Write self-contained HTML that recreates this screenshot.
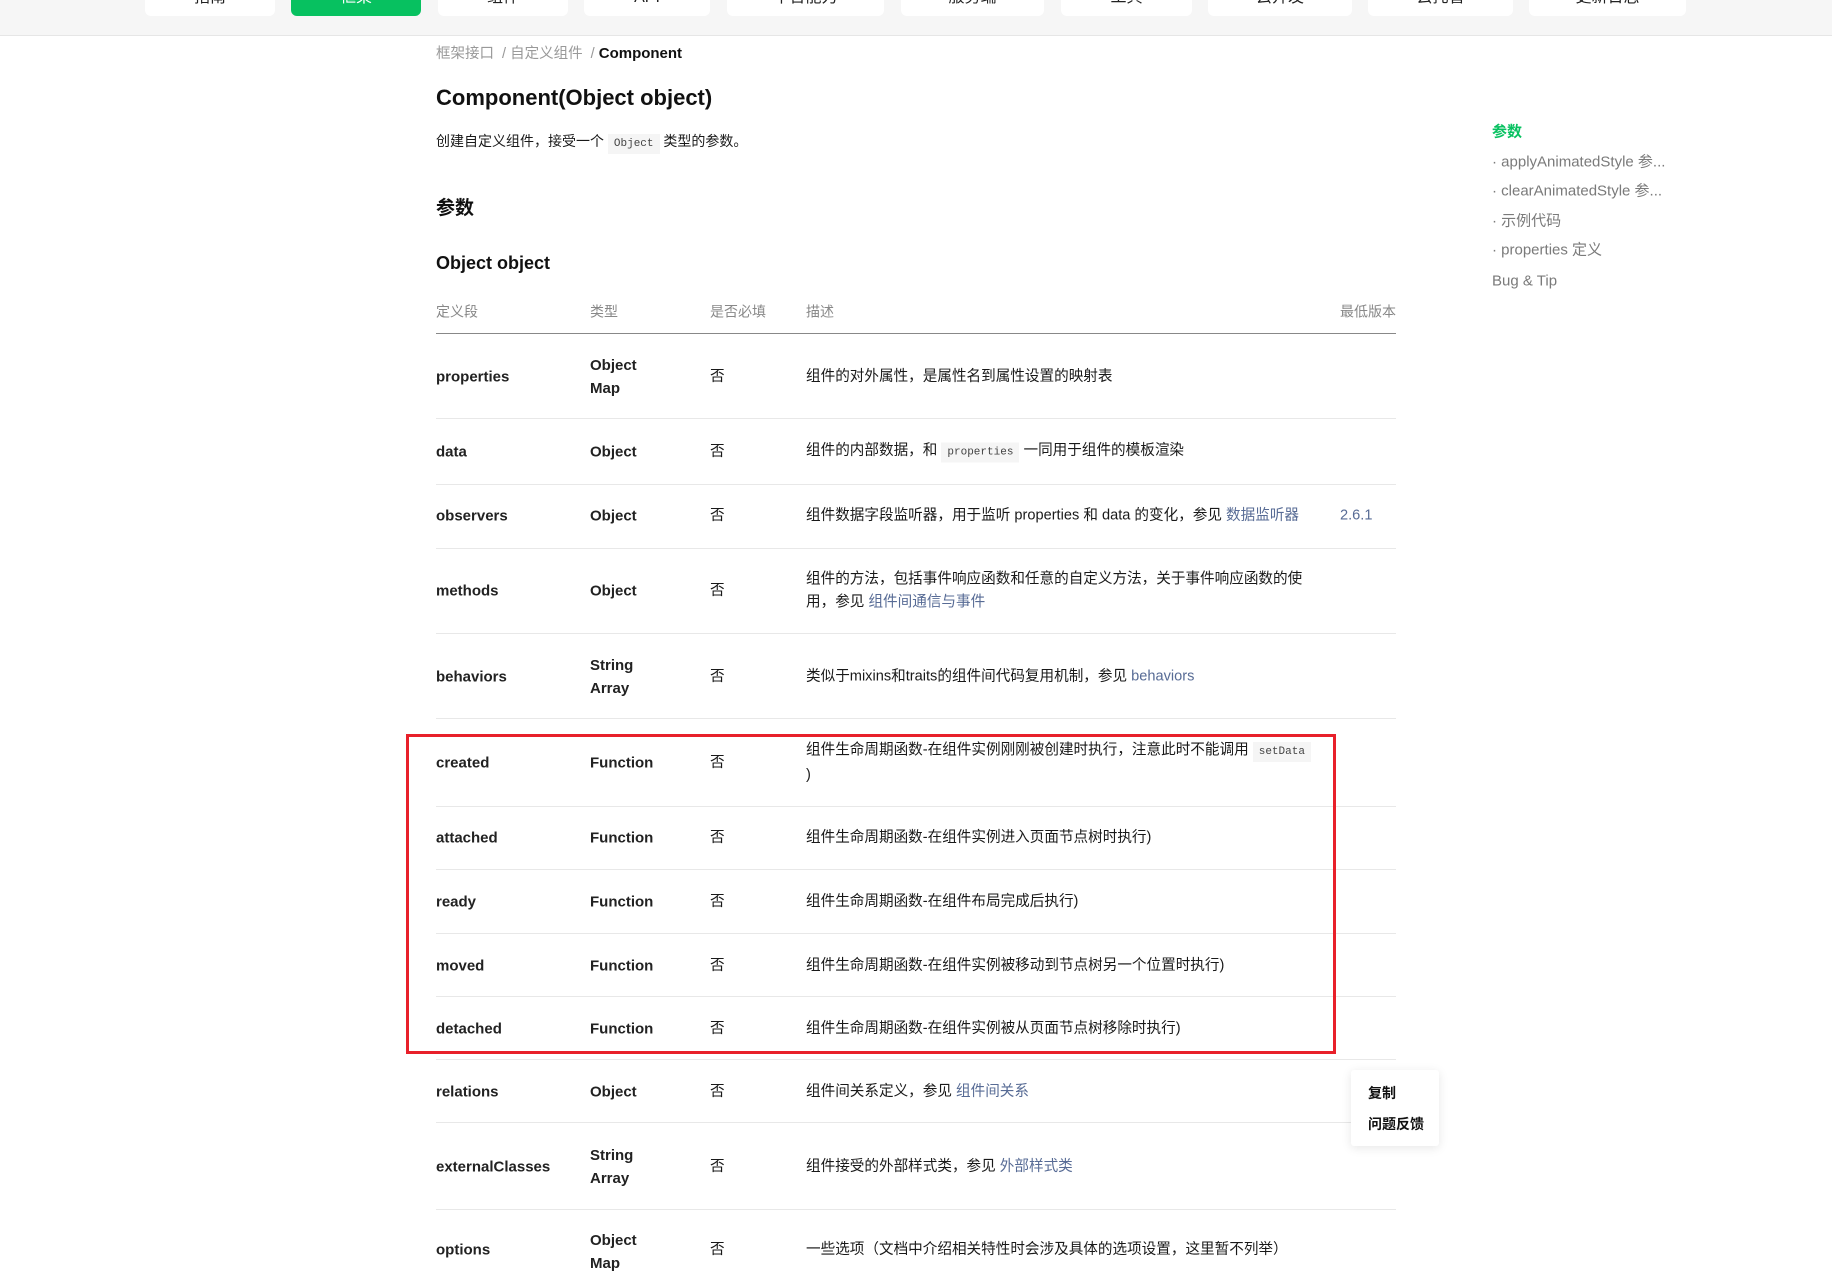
<!DOCTYPE html>
<html><head><meta charset="utf-8"><style>
*{margin:0;padding:0;box-sizing:border-box}
body{width:1832px;height:1253px;overflow:hidden;background:#fff;position:relative;font-family:"Liberation Sans","Noto Sans CJK SC",sans-serif;color:rgba(0,0,0,.9)}
.nav{position:absolute;left:0;top:0;width:1832px;height:36px;background:#f6f6f6;border-bottom:1px solid #e6e6e6}
.nb{position:absolute;top:-10px;height:26px;background:#fff;border-radius:0 0 6px 6px;font-size:16px;text-align:center;line-height:16px;color:#222;overflow:hidden}
.nb.g{background:#07c160;color:#fff}
.a{position:absolute;white-space:nowrap}
.c{position:absolute;white-space:nowrap;transform:translateY(-50%);font-size:14.6px;line-height:23px}
.b{font-weight:bold;color:#222;font-size:15px}
.l{color:#576b95}
code{font-family:"Liberation Mono",monospace;font-size:11px;background:#f5f5f5;padding:4px 6px;color:#444}
.hr{position:absolute;left:436px;width:960px;height:1px;background:#e8e8e8}
.toc{position:absolute;left:1492px;font-size:15px;color:#7a7a7a;white-space:nowrap;transform:translateY(-50%)}
</style></head><body>
<div class="nav">
<div class="nb" style="left:145px;width:130px">指南</div>
<div class="nb g" style="left:291px;width:130px">框架</div>
<div class="nb" style="left:438px;width:130px">组件</div>
<div class="nb" style="left:584px;width:126px">API</div>
<div class="nb" style="left:727px;width:157px">平台能力</div>
<div class="nb" style="left:901px;width:143px">服务端</div>
<div class="nb" style="left:1061px;width:131px">工具</div>
<div class="nb" style="left:1208px;width:144px">云开发</div>
<div class="nb" style="left:1368px;width:145px">云托管</div>
<div class="nb" style="left:1529px;width:157px">更新日志</div>
</div>
<div class="a" style="left:436px;top:42px;font-size:14.5px;color:#999">框架接口 &nbsp;/ 自定义组件 &nbsp;/ <span class="b" style="color:#111">Component</span></div>
<div class="a b" style="left:436px;top:85px;font-size:22px;color:#111">Component(Object object)</div>
<div class="a" style="left:436px;top:130px;font-size:14px;line-height:22px">创建自定义组件，接受一个 <code>Object</code> 类型的参数。</div>
<div class="a b" style="left:436px;top:193px;font-size:19px;color:#111">参数</div>
<div class="a b" style="left:436px;top:253px;font-size:18px;color:#111">Object object</div>
<div class="c" style="left:436px;top:312px;color:#888;font-size:14px">定义段</div>
<div class="c" style="left:590px;top:312px;color:#888;font-size:14px">类型</div>
<div class="c" style="left:710px;top:312px;color:#888;font-size:14px">是否必填</div>
<div class="c" style="left:806px;top:312px;color:#888;font-size:14px">描述</div>
<div class="c" style="left:1340px;top:312px;color:#888;font-size:14px">最低版本</div>
<div class="hr" style="top:333px;height:1px;background:#888"></div>

<div class="c b" style="left:436px;top:377px">properties</div><div class="c b" style="left:590px;top:377px">Object<br>Map</div><div class="c" style="left:710px;top:377px">否</div><div class="c" style="left:806px;top:377px">组件的对外属性，是属性名到属性设置的映射表</div>
<div class="hr" style="top:418px"></div>
<div class="c b" style="left:436px;top:452px">data</div><div class="c b" style="left:590px;top:452px">Object</div><div class="c" style="left:710px;top:452px">否</div><div class="c" style="left:806px;top:452px">组件的内部数据，和 <code>properties</code> 一同用于组件的模板渲染</div>
<div class="hr" style="top:484px"></div>
<div class="c b" style="left:436px;top:516px">observers</div><div class="c b" style="left:590px;top:516px">Object</div><div class="c" style="left:710px;top:516px">否</div><div class="c" style="left:806px;top:516px">组件数据字段监听器，用于监听 properties 和 data 的变化，参见 <span class="l">数据监听器</span></div><div class="c l" style="left:1340px;top:516px">2.6.1</div>
<div class="hr" style="top:548px"></div>
<div class="c b" style="left:436px;top:591px">methods</div><div class="c b" style="left:590px;top:591px">Object</div><div class="c" style="left:710px;top:591px">否</div><div class="c" style="left:806px;top:591px">组件的方法，包括事件响应函数和任意的自定义方法，关于事件响应函数的使<br>用，参见 <span class="l">组件间通信与事件</span></div>
<div class="hr" style="top:633px"></div>
<div class="c b" style="left:436px;top:677px">behaviors</div><div class="c b" style="left:590px;top:677px">String<br>Array</div><div class="c" style="left:710px;top:677px">否</div><div class="c" style="left:806px;top:677px">类似于mixins和traits的组件间代码复用机制，参见 <span class="l">behaviors</span></div>
<div class="hr" style="top:718px"></div>
<div class="c b" style="left:436px;top:763px">created</div><div class="c b" style="left:590px;top:763px">Function</div><div class="c" style="left:710px;top:763px">否</div><div class="c" style="left:806px;top:763px">组件生命周期函数-在组件实例刚刚被创建时执行，注意此时不能调用 <code>setData</code><br>)</div>
<div class="hr" style="top:806px"></div>
<div class="c b" style="left:436px;top:838px">attached</div><div class="c b" style="left:590px;top:838px">Function</div><div class="c" style="left:710px;top:838px">否</div><div class="c" style="left:806px;top:838px">组件生命周期函数-在组件实例进入页面节点树时执行)</div>
<div class="hr" style="top:869px"></div>
<div class="c b" style="left:436px;top:902px">ready</div><div class="c b" style="left:590px;top:902px">Function</div><div class="c" style="left:710px;top:902px">否</div><div class="c" style="left:806px;top:902px">组件生命周期函数-在组件布局完成后执行)</div>
<div class="hr" style="top:933px"></div>
<div class="c b" style="left:436px;top:966px">moved</div><div class="c b" style="left:590px;top:966px">Function</div><div class="c" style="left:710px;top:966px">否</div><div class="c" style="left:806px;top:966px">组件生命周期函数-在组件实例被移动到节点树另一个位置时执行)</div>
<div class="hr" style="top:996px"></div>
<div class="c b" style="left:436px;top:1029px">detached</div><div class="c b" style="left:590px;top:1029px">Function</div><div class="c" style="left:710px;top:1029px">否</div><div class="c" style="left:806px;top:1029px">组件生命周期函数-在组件实例被从页面节点树移除时执行)</div>
<div class="hr" style="top:1059px"></div>
<div class="c b" style="left:436px;top:1092px">relations</div><div class="c b" style="left:590px;top:1092px">Object</div><div class="c" style="left:710px;top:1092px">否</div><div class="c" style="left:806px;top:1092px">组件间关系定义，参见 <span class="l">组件间关系</span></div>
<div class="hr" style="top:1122px"></div>
<div class="c b" style="left:436px;top:1167px">externalClasses</div><div class="c b" style="left:590px;top:1167px">String<br>Array</div><div class="c" style="left:710px;top:1167px">否</div><div class="c" style="left:806px;top:1167px">组件接受的外部样式类，参见 <span class="l">外部样式类</span></div>
<div class="hr" style="top:1209px"></div>
<div class="c b" style="left:436px;top:1250px">options</div><div class="c b" style="left:590px;top:1252px">Object<br>Map</div><div class="c" style="left:710px;top:1250px">否</div><div class="c" style="left:806px;top:1250px">一些选项（文档中介绍相关特性时会涉及具体的选项设置，这里暂不列举）</div>

<div style="position:absolute;left:406px;top:734px;width:930px;height:320px;border:3px solid #e8202a"></div>

<div class="toc" style="top:131px;color:#07c160;font-weight:bold">参数</div>
<div class="toc" style="top:161px">· applyAnimatedStyle 参...</div>
<div class="toc" style="top:190px">· clearAnimatedStyle 参...</div>
<div class="toc" style="top:220px">· 示例代码</div>
<div class="toc" style="top:249px">· properties 定义</div>
<div class="toc" style="top:281px">Bug &amp; Tip</div>

<div style="position:absolute;left:1351px;top:1070px;width:88px;height:76px;background:#fff;box-shadow:0 2px 10px rgba(0,0,0,.1);border-radius:3px"></div>
<div class="toc" style="left:1368px;top:1093px;color:#111;font-weight:bold;font-size:14px">复制</div>
<div class="toc" style="left:1368px;top:1124px;color:#111;font-weight:bold;font-size:14px">问题反馈</div>
</body></html>
